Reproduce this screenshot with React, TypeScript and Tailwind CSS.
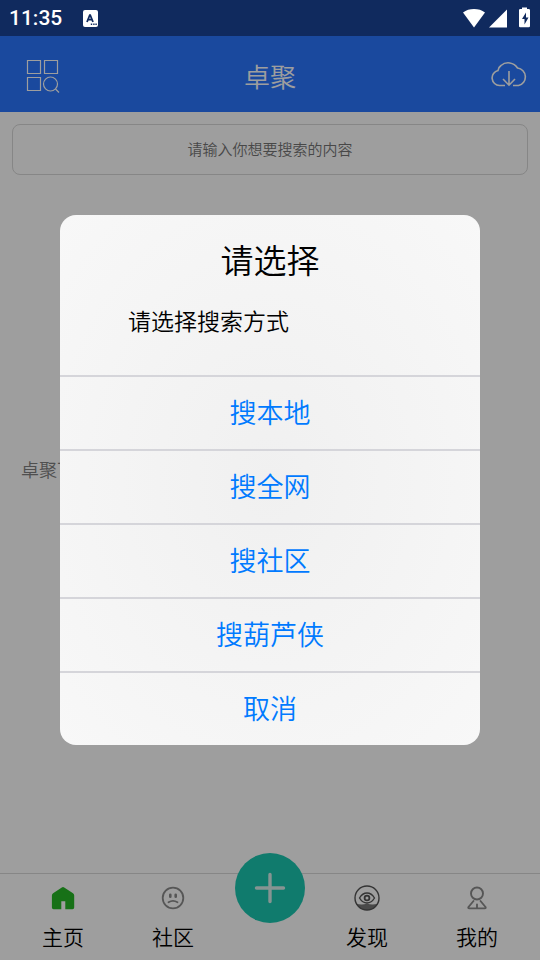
import type { ReactNode } from "react";

const options = ["搜本地", "搜全网", "搜社区", "搜葫芦侠", "取消"];

function StatusBar() {
  return (
    <div className="relative z-20 flex h-9 items-center bg-[#102a5e] px-[9px] text-white">
      <span className="font-[Roboto,sans-serif] text-[21px] leading-9 font-medium">11:35</span>
      <svg className="ml-5" width="16" height="17" viewBox="0 0 16 17" aria-hidden="true">
        <rect x="1" width="15" height="17" rx="2" fill="#fff" />
        <path d="M5 12 8 4.500 11 12M6 9.600h4" fill="none" stroke="#102a5e" strokeWidth="1.800" strokeLinejoin="bevel" />
        <path d="M8.800 14.300h1.400M11.200 14.300h1.400M13.400 14.300h1.400" stroke="#102a5e" strokeWidth="1.400" />
      </svg>
      <svg className="ml-auto" width="68" height="22" viewBox="0 0 68 22" fill="#fff" aria-hidden="true">
        <path d="M11 20.500 0 5.500C6 .9 16 .9 22 5.500Z" />
        <path d="M26 20.500 44 2.500v18Z" />
        <path d="M59 .5h5v1.500h1.700a1.300 1.300 0 0 1 1.300 1.300v15.700a1.300 1.300 0 0 1-1.300 1.300h-8.400a1.300 1.300 0 0 1-1.300-1.300V3.300A1.300 1.300 0 0 1 57.300 2H59Z" />
        <path d="M63 5.500 59 12h2.500v5.500l4-7H63Z" fill="#102a5e" />
      </svg>
    </div>
  );
}

function Header() {
  return (
    <header className="grid h-19 grid-cols-[1fr_auto_1fr] items-center bg-[#2a77ff] px-3 pt-1 text-white">
      <button type="button" aria-label="分类" className="justify-self-start pl-[14px]">
        <svg width="34" height="34" viewBox="0 0 34 34" fill="none" stroke="currentColor" strokeWidth="1.200">
          <path d="M1.500 1.500h13v13h-13ZM18.500 1.500h13v13h-13ZM1.500 18.500h13v13h-13Z" />
          <circle cx="24.500" cy="25" r="7" />
          <path d="m29.500 30 3.500 3.500" />
        </svg>
      </button>
      <h1 className="text-[26px] leading-9">卓聚</h1>
      <button type="button" aria-label="下载" className="justify-self-end">
        <svg width="38" height="34" viewBox="0 0 38 34" fill="none" stroke="currentColor" strokeWidth="1.600">
          <path d="M15 26.500H9.500A7.600 7.600 0 0 1 8 11.500 7 7 0 0 1 11 6.500 11 11 0 0 1 27.500 9 8.900 8.900 0 0 1 28.500 26.500H23" />
          <path d="M19 12v14.500M13 20l6 6.200 6-6.200" />
        </svg>
      </button>
    </header>
  );
}

function Tab({ label, children }: { label: string; children: ReactNode }) {
  return (
    <button type="button" className="flex flex-1 flex-col items-center pt-[10px] text-[21px] leading-7 text-black">
      <span className="mb-[10px] flex h-7 items-center">{children}</span>
      {label}
    </button>
  );
}

function TabBar() {
  return (
    <nav className="flex h-[87px] border-t border-[#d8d8d8] px-2">
      <Tab label="主页">
        <svg width="24" height="24" viewBox="0 0 24 24" fill="#26b626" aria-hidden="true">
          <path d="M10.800 1.400q1.200-.8 2.400 0l8.800 5.800q1.200.8 1.200 2.200v12.100q0 1.700-1.700 1.700h-7.200v-8h-4v8H2.600q-1.700 0-1.700-1.700V9.400Q.9 8 2.100 7.200Z" />
        </svg>
      </Tab>
      <Tab label="社区">
        <svg width="24" height="24" viewBox="0 0 24 24" fill="none" stroke="#8c8c8c" strokeWidth="1.800" strokeLinecap="round" aria-hidden="true">
          <circle cx="12" cy="12" r="10.300" />
          <path d="M9.300 8.800v2M14.700 8.800v2" strokeWidth="2.600" />
          <path d="M7.500 16.300q4.500-3 9 0" />
        </svg>
      </Tab>
      <div className="flex w-[84px] justify-center">
        <button type="button" aria-label="发布" className="-mt-[21px] size-[70px] rounded-full bg-[#1bc7b0]">
          <svg width="70" height="70" viewBox="0 0 70 70" fill="none" stroke="#d8efec" strokeWidth="3.400" strokeLinecap="round">
            <path d="M35 21.500v27M21.500 35h27" />
          </svg>
        </button>
      </div>
      <Tab label="发现">
        <svg width="26" height="26" viewBox="0 0 26 26" fill="none" stroke="#555" strokeWidth="1.400" aria-hidden="true">
          <path d="M2 18.500q5.500 2 11 0 5.500 2 11 0-3.500 6.500-11 6.500t-11-6.500Z" fill="#777" stroke="none" />
          <circle cx="13" cy="13" r="12" />
          <path d="M5.500 13q3-5 7.500-5t7.500 5q-3 5-7.500 5t-7.500-5Z" />
          <circle cx="13" cy="13" r="2.400" strokeWidth="1.800" />
        </svg>
      </Tab>
      <Tab label="我的">
        <svg width="24" height="24" viewBox="0 0 24 24" fill="none" stroke="#8c8c8c" strokeWidth="1.900" strokeLinecap="round" strokeLinejoin="round" aria-hidden="true">
          <circle cx="12" cy="7.500" r="6" />
          <path d="M8.500 15 3.500 21Q2.800 22.400 4.300 22.400h15.400q1.500 0 .8-1.400L15.500 15M12 18.500v3.500" />
        </svg>
      </Tab>
    </nav>
  );
}

function ChoiceDialog() {
  return (
    <div className="absolute inset-0 z-10 flex items-center justify-center bg-black/38 px-15">
      <div
        role="dialog"
        aria-modal="true"
        aria-labelledby="dialog-title"
        className="w-full max-w-[420px] overflow-hidden rounded-2xl bg-radial from-[#f0f0f0] to-[#f8f8f8] text-black"
      >
        <h2 id="dialog-title" className="pt-[22px] text-center text-[33px] leading-11">请选择</h2>
        <p className="px-17 pt-6 pb-10 text-[23px] leading-[30px]">请选择搜索方式</p>
        {options.map((option) => (
          <button
            key={option}
            type="button"
            className="block h-[74px] w-full border-t-2 border-[#d5d5da] pb-[2px] text-[27px] leading-9 text-[#007aff]"
          >
            {option}
          </button>
        ))}
      </div>
    </div>
  );
}

export default function App() {
  return (
    <div className="relative flex min-h-screen flex-col bg-white font-['Noto_Sans_CJK_SC',sans-serif] font-[350]">
      <StatusBar />
      <Header />
      <main className="flex flex-1 flex-col p-3">
        <input
          type="text"
          aria-label="搜索"
          placeholder="请输入你想要搜索的内容"
          className="h-[51px] w-full rounded-lg border border-[#d8d8d8] pb-[2px] text-center text-[15px] placeholder:text-[#757575]"
        />
        <p className="mt-[282px] pl-[9px] text-[18px] leading-6 text-[#808080]">卓聚下</p>
      </main>
      <TabBar />
      <ChoiceDialog />
    </div>
  );
}
